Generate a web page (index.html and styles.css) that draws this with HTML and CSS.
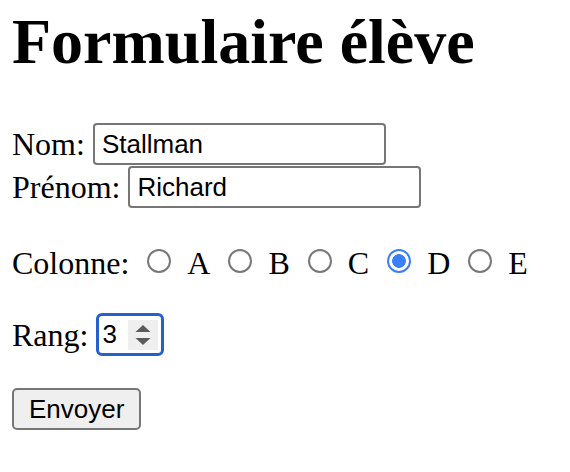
FILE: index.html
```html
<!DOCTYPE html>
<html lang="fr">
<head>
<meta charset="utf-8">
<title>Formulaire élève</title>
<link rel="stylesheet" href="styles.css">
</head>
<body>
<h1 class="title">Formulaire élève</h1>
<form class="form">
  <div class="row row-nom">
    <label class="lbl" for="nom">Nom:</label>
    <input class="text" id="nom" type="text" value="Stallman">
  </div>
  <div class="row row-prenom">
    <label class="lbl" for="prenom">Prénom:</label>
    <input class="text" id="prenom" type="text" value="Richard">
  </div>
  <div class="row row-col">
    <span class="lbl">Colonne:</span>
    <div class="choices">
      <label class="choice"><input class="radio" type="radio" name="col" value="A"><span>A</span></label>
      <label class="choice"><input class="radio" type="radio" name="col" value="B"><span>B</span></label>
      <label class="choice"><input class="radio" type="radio" name="col" value="C"><span>C</span></label>
      <label class="choice"><input class="radio" type="radio" name="col" value="D" checked><span>D</span></label>
      <label class="choice"><input class="radio" type="radio" name="col" value="E"><span>E</span></label>
    </div>
  </div>
  <div class="row row-rang">
    <label class="lbl" for="rang">Rang:</label>
    <span class="number">
      <input class="num" id="rang" type="text" value="3">
      <span class="spin">
        <svg width="16" height="22" viewBox="0 0 16 22"><path d="M8 1 L15.5 8 L0.5 8 Z" fill="#5b5b5b"/><path d="M0.5 14 L15.5 14 L8 21 Z" fill="#5b5b5b"/></svg>
      </span>
    </span>
  </div>
  <div class="row row-btn">
    <button class="btn" type="button">Envoyer</button>
  </div>
</form>
</body>
</html>
```

FILE: styles.css
```css
html, body {
  margin: 0;
  padding: 0;
  background: #fff;
}
body {
  padding: 5px 12px 0 12px;
  font-family: "Liberation Serif", "Times New Roman", serif;
  font-size: 32px;
  color: #000;
}
.title {
  margin: 0;
  font-size: 64px;
  font-weight: bold;
  line-height: 74px;
  height: 74px;
}
.form {
  display: flex;
  flex-direction: column;
  align-items: flex-start;
}
.row {
  display: flex;
  align-items: center;
  gap: 8px;
}
.lbl {
  line-height: 36px;
}
.row-nom { margin-top: 44px; }
.row-prenom { margin-top: 1px; }
.row-col { margin-top: 37px; height: 36px; gap: 18px; }
.row-rang { margin-top: 32px; }
.row-btn { margin-top: 32px; }

.text {
  box-sizing: border-box;
  width: 293px;
  height: 42px;
  margin: 0;
  padding: 0 7px;
  border: 2px solid #767676;
  border-radius: 4px;
  background: #fff;
  font-family: "Liberation Sans", Arial, sans-serif;
  font-size: 26px;
  color: #000;
  outline: none;
}

.choices {
  display: flex;
  align-items: center;
  gap: 18px;
}
.choice {
  display: flex;
  align-items: center;
  gap: 16px;
  line-height: 36px;
}
.radio {
  appearance: none;
  -webkit-appearance: none;
  box-sizing: border-box;
  width: 24px;
  height: 24px;
  margin: 0 0 5px 0;
  border: 2px solid #777;
  border-radius: 50%;
  background: #fff;
}
.radio:checked {
  border: 2.5px solid #3a7ff6;
  background: radial-gradient(circle, #3a7ff6 0 6.5px, #fff 7.2px);
}

.number {
  box-sizing: border-box;
  display: inline-flex;
  align-items: center;
  width: 68px;
  height: 43px;
  border: 3.5px solid #2560cc;
  border-radius: 6px;
  background: #fff;
  padding: 0 3.5px 0 3px;
}
.num {
  flex: 1;
  min-width: 0;
  border: 0;
  padding: 0;
  margin: 0;
  outline: none;
  background: transparent;
  font-family: "Liberation Sans", Arial, sans-serif;
  font-size: 26px;
  color: #000;
}
.spin {
  width: 30px;
  height: 30px;
  background: #efefef;
  display: flex;
  align-items: center;
  justify-content: center;
}

.btn {
  box-sizing: border-box;
  height: 42px;
  margin: 0;
  padding: 0 15px;
  border: 2px solid #767676;
  border-radius: 5px;
  background: #efefef;
  font-family: "Liberation Sans", Arial, sans-serif;
  font-size: 26px;
  color: #000;
}
```
